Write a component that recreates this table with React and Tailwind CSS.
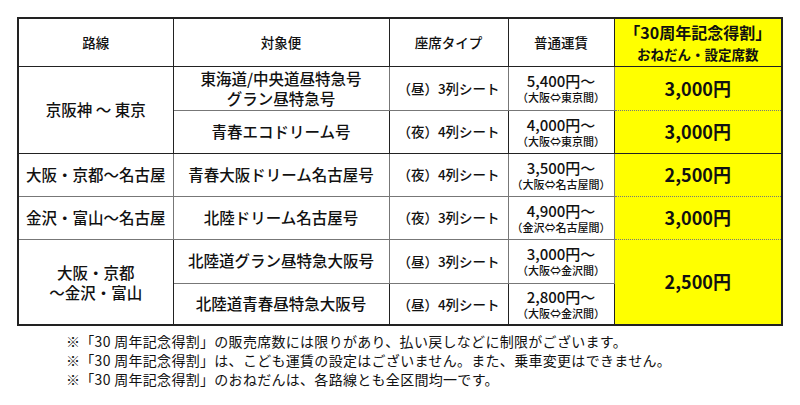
import React from "react";

const F = { fontFamily: '"Noto Sans CJK JP", "Noto Sans", sans-serif' };

function Fare({ price, sub }) {
  return (
    <div className="flex flex-col items-center">
      <span className="text-[15px] leading-[18px]">{price}</span>
      <span className="text-[11px] leading-[14px]">{sub}</span>
    </div>
  );
}

export default function App() {
  const solid = "border-b border-solid border-[#222]";
  const dotted = "border-b border-dotted border-[#777]";
  const vr = "border-r-[1.5px] border-solid border-[#222]";
  const base = "text-center align-middle p-0 text-[#111]";
  const cell = `${base} font-medium`;
  const name = "text-[15.5px]";
  const seat = "text-[13.5px]";
  const price = `${base} bg-[#ffff00] font-bold text-[18px]`;
  return (
    <div className="w-[800px] h-[405px] bg-white relative" style={F}>
      <div className="pt-[17px] pl-[17px]">
        <table className="border-collapse border-2 border-solid border-[#222] table-fixed" style={{ width: 764 }}>
          <colgroup>
            <col style={{ width: 155 }} />
            <col style={{ width: 216 }} />
            <col style={{ width: 119 }} />
            <col style={{ width: 106 }} />
            <col style={{ width: 168 }} />
          </colgroup>
          <tbody>
            <tr className="h-[48px]">
              <td className={`${cell} ${vr} ${solid} text-[13.5px]`}>路線</td>
              <td className={`${cell} ${vr} ${solid} text-[13.5px]`}>対象便</td>
              <td className={`${cell} ${vr} ${solid} text-[13.5px]`}>座席タイプ</td>
              <td className={`${cell} ${vr} ${solid} text-[13.5px]`}>普通運賃</td>
              <td className={`${base} ${solid} bg-[#ffff00] font-bold`}>
                <div className="flex flex-col items-center gap-[1px]">
                  <span className="text-[16px] leading-[22px]">「30周年記念得割」</span>
                  <span className="text-[13.5px] leading-[20px]">おねだん・設定席数</span>
                </div>
              </td>
            </tr>
            <tr className="h-[44px]">
              <td rowSpan={2} className={`${cell} ${vr} ${solid} ${name}`}>京阪神 ～ 東京</td>
              <td className={`${cell} ${vr} ${dotted} ${name} leading-[20px]`}>
                東海道/中央道昼特急号<br />グラン昼特急号
              </td>
              <td className={`${cell} ${vr} ${dotted} ${seat}`}>（昼）3列シート</td>
              <td className={`${cell} ${vr} ${dotted}`}><Fare price="5,400円～" sub="（大阪⇔東京間）" /></td>
              <td className={`${price} ${dotted}`}>3,000円</td>
            </tr>
            <tr className="h-[43px]">
              <td className={`${cell} ${vr} ${solid} ${name}`}>青春エコドリーム号</td>
              <td className={`${cell} ${vr} ${solid} ${seat}`}>（夜）4列シート</td>
              <td className={`${cell} ${vr} ${solid}`}><Fare price="4,000円～" sub="（大阪⇔東京間）" /></td>
              <td className={`${price} ${solid}`}>3,000円</td>
            </tr>
            <tr className="h-[43px]">
              <td className={`${cell} ${vr} ${dotted} ${name}`}>大阪・京都～名古屋</td>
              <td className={`${cell} ${vr} ${dotted} ${name}`}>青春大阪ドリーム名古屋号</td>
              <td className={`${cell} ${vr} ${dotted} ${seat}`}>（夜）4列シート</td>
              <td className={`${cell} ${vr} ${dotted}`}><Fare price="3,500円～" sub="（大阪⇔名古屋間）" /></td>
              <td className={`${price} ${dotted}`}>2,500円</td>
            </tr>
            <tr className="h-[43px]">
              <td className={`${cell} ${vr} ${dotted} ${name}`}>金沢・富山～名古屋</td>
              <td className={`${cell} ${vr} ${dotted} ${name}`}>北陸ドリーム名古屋号</td>
              <td className={`${cell} ${vr} ${dotted} ${seat}`}>（夜）3列シート</td>
              <td className={`${cell} ${vr} ${dotted}`}><Fare price="4,900円～" sub="（金沢⇔名古屋間）" /></td>
              <td className={`${price} ${dotted}`}>3,000円</td>
            </tr>
            <tr className="h-[44px]">
              <td rowSpan={2} className={`${cell} ${vr} ${name} leading-[20px]`}>大阪・京都<br />～金沢・富山</td>
              <td className={`${cell} ${vr} ${dotted} ${name}`}>北陸道グラン昼特急大阪号</td>
              <td className={`${cell} ${vr} ${dotted} ${seat}`}>（昼）3列シート</td>
              <td className={`${cell} ${vr} ${dotted}`}><Fare price="3,000円～" sub="（大阪⇔金沢間）" /></td>
              <td rowSpan={2} className={price}>2,500円</td>
            </tr>
            <tr className="h-[42px]">
              <td className={`${cell} ${vr} ${name}`}>北陸道青春昼特急大阪号</td>
              <td className={`${cell} ${vr} ${seat}`}>（昼）4列シート</td>
              <td className={`${cell} ${vr}`}><Fare price="2,800円～" sub="（大阪⇔金沢間）" /></td>
            </tr>
          </tbody>
        </table>
      </div>
      <div className="pl-[66px] pt-[6px] text-[14px] tracking-[0.3px] leading-[19px] text-[#111]">
        <div>※「30 周年記念得割」の販売席数には限りがあり、払い戻しなどに制限がございます。</div>
        <div>※「30 周年記念得割」は、こども運賃の設定はございません。また、乗車変更はできません。</div>
        <div>※「30 周年記念得割」のおねだんは、各路線とも全区間均一です。</div>
      </div>
    </div>
  );
}
